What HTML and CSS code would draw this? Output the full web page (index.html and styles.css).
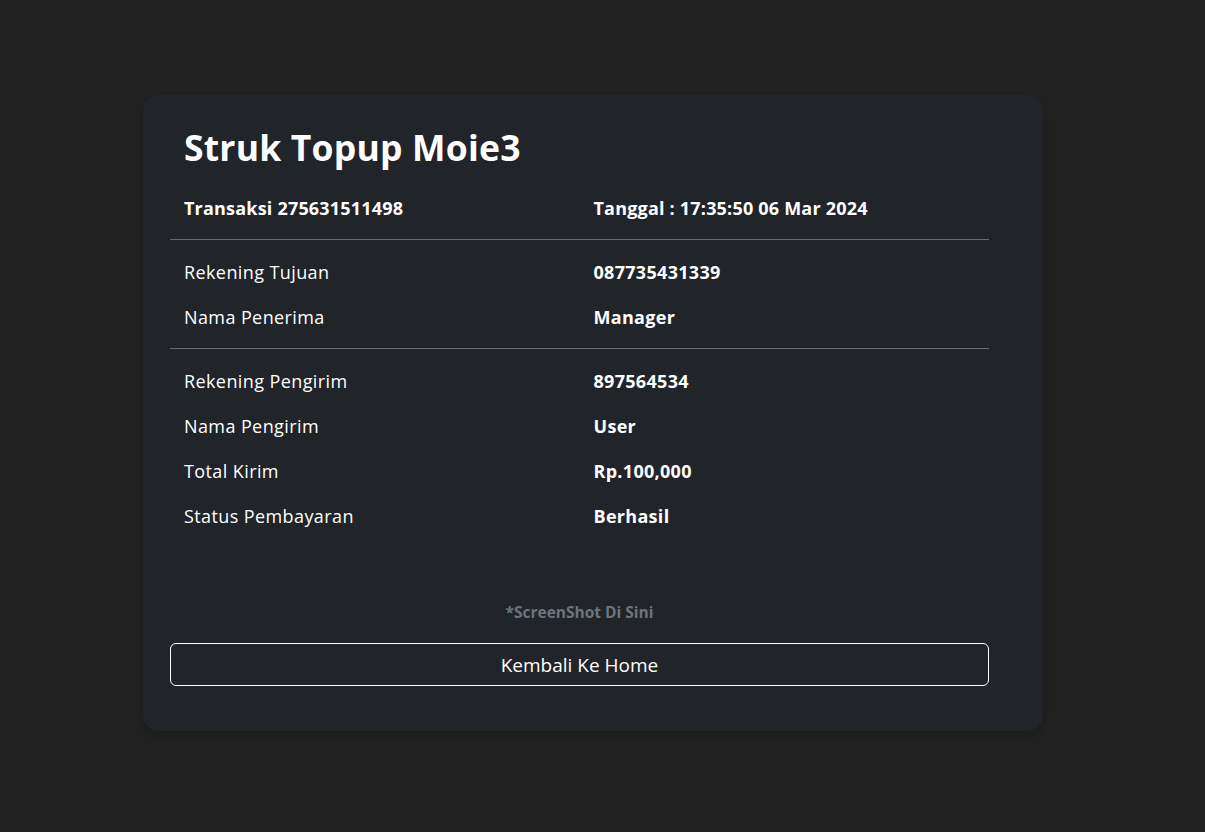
FILE: index.html
```html
<!DOCTYPE html>
<html lang="id">
<head>
<meta charset="utf-8">
<title>Struk Topup</title>
<link rel="stylesheet" href="styles.css">
</head>
<body>
<main class="page">
  <section class="card">
    <h1 class="title">Struk Topup Moie3</h1>
    <div class="row head">
      <div class="cell">Transaksi 275631511498</div>
      <div class="cell">Tanggal : 17:35:50 06 Mar 2024</div>
    </div>
    <hr class="sep">
    <div class="row">
      <div class="cell label">Rekening Tujuan</div>
      <div class="cell value">087735431339</div>
    </div>
    <div class="row">
      <div class="cell label">Nama Penerima</div>
      <div class="cell value">Manager</div>
    </div>
    <hr class="sep">
    <div class="row">
      <div class="cell label">Rekening Pengirim</div>
      <div class="cell value">897564534</div>
    </div>
    <div class="row">
      <div class="cell label">Nama Pengirim</div>
      <div class="cell value">User</div>
    </div>
    <div class="row">
      <div class="cell label">Total Kirim</div>
      <div class="cell value">Rp.100,000</div>
    </div>
    <div class="row">
      <div class="cell label">Status Pembayaran</div>
      <div class="cell value">Berhasil</div>
    </div>
    <p class="note">*ScreenShot Di Sini</p>
    <button class="btn" type="button">Kembali Ke Home</button>
  </section>
</main>
</body>
</html>
```

FILE: styles.css
```css
* { box-sizing: border-box; }
html, body {
  margin: 0;
  padding: 0;
  background: #222222;
  font-family: "Open Sans", "DejaVu Sans", sans-serif;
  color: #ffffff;
}
.page {
  display: flex;
  justify-content: flex-start;
  padding: 95px 0 0 143px;
  min-height: 832px;
}
.card {
  width: 900px;
  height: 636px;
  background: #212429;
  border-radius: 16px;
  padding: 28px 54px 27px 27px;
  box-shadow: 0 4px 14px rgba(0, 0, 0, 0.25);
  display: flex;
  flex-direction: column;
}
.title {
  margin: 0 0 14px 14px;
  font-size: 35.5px;
  font-weight: 700;
  line-height: 48px;
  letter-spacing: 0.2px;
}
.row {
  display: grid;
  grid-template-columns: 1fr 1fr;
  height: 45px;
  align-items: center;
}
.cell {
  padding: 0 14px;
  font-size: 18px;
  white-space: nowrap;
}
.label { letter-spacing: 0.4px; }
.head .cell {
  font-weight: 700;
  font-size: 18px;
  letter-spacing: 0.2px;
}
.value { font-weight: 700; letter-spacing: 0.3px; }
.sep {
  margin: 9px 0;
  border: 0;
  border-top: 1px solid #6a6c70;
  height: 0;
}
.note {
  margin: 62px 0 0;
  text-align: center;
  color: #6c757d;
  font-weight: 700;
  font-size: 15.5px;
  line-height: 24px;
}
.btn {
  margin-top: 19px;
  height: 43px;
  background: transparent;
  border: 1px solid #ffffff;
  border-radius: 6px;
  color: #ffffff;
  font-family: inherit;
  font-size: 19px;
}
```
